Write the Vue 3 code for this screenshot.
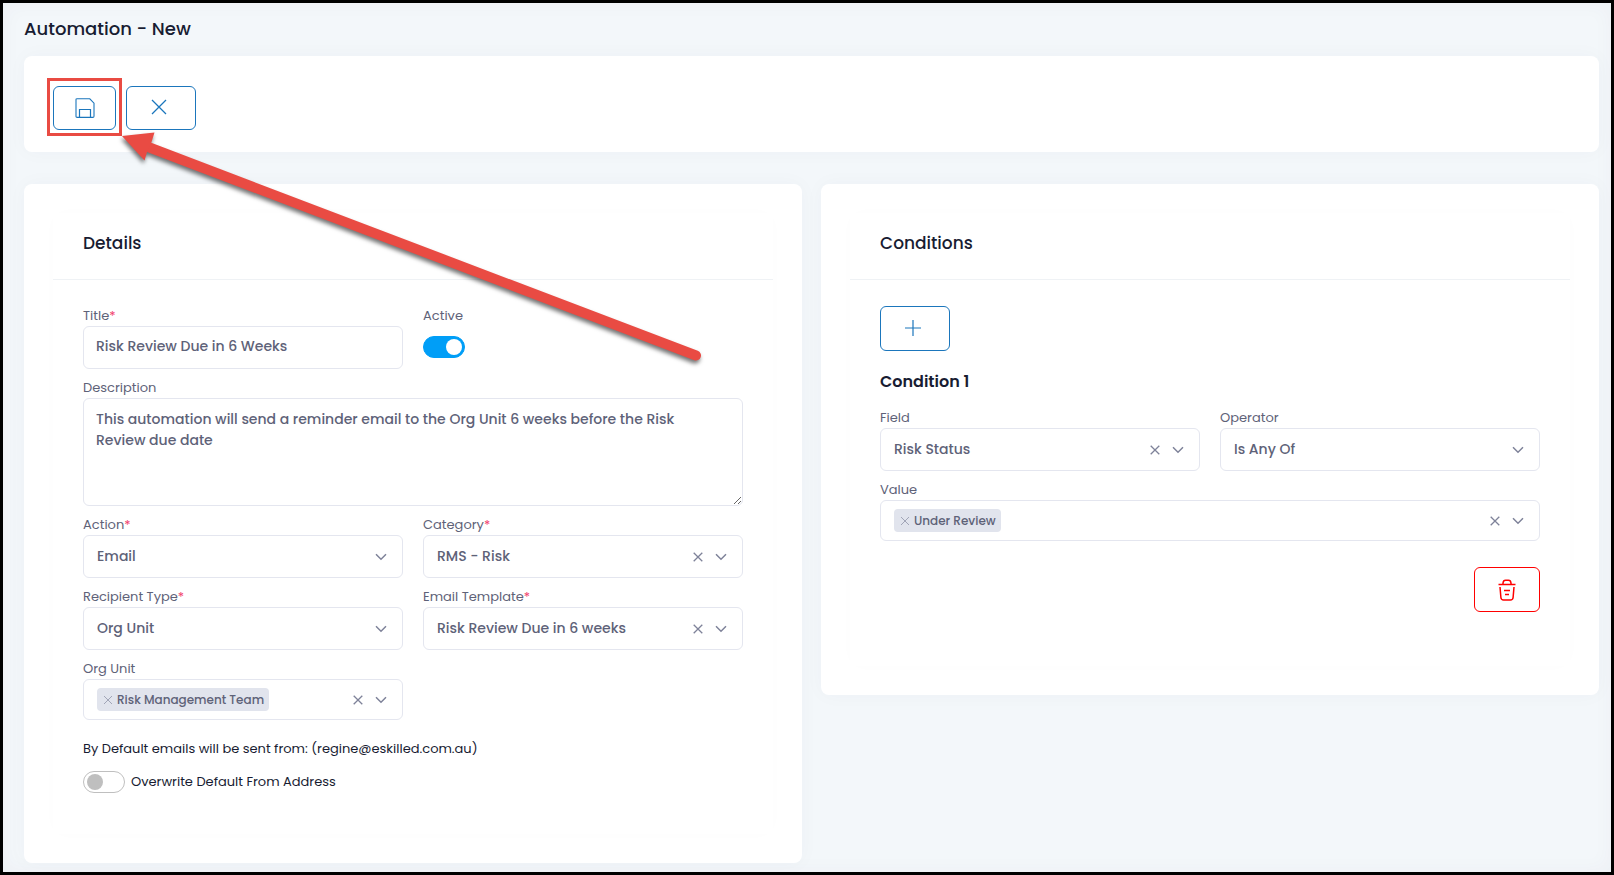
<script setup>
import { ref } from 'vue'

const title = ref('Risk Review Due in 6 Weeks')
const active = ref(true)
const description = ref(
  'This automation will send a reminder email to the Org Unit 6 weeks before the Risk Review due date'
)
const overwrite = ref(false)

const detailSelects = [
  { id: 'action', label: 'Action', required: true, value: 'Email', clearable: false },
  { id: 'category', label: 'Category', required: true, value: 'RMS - Risk', clearable: true },
  { id: 'recipient', label: 'Recipient Type', required: true, value: 'Org Unit', clearable: false },
  { id: 'template', label: 'Email Template', required: true, value: 'Risk Review Due in 6 weeks', clearable: true }
]
const conditionSelects = [
  { id: 'field', label: 'Field', value: 'Risk Status', clearable: true },
  { id: 'operator', label: 'Operator', value: 'Is Any Of', clearable: false }
]
</script>

<template>
  <div class="page">
    <h1 class="page-title">Automation - New</h1>

    <section class="card toolbar">
      <div class="callout">
        <button class="btn save" type="button" aria-label="Save">
          <svg width="20" height="20" viewBox="0 0 20 20" fill="none" stroke="currentColor">
            <path d="M1.5 .8H14.8L19 5.2V18.2Q19 19.4 17.8 19.4H2.2Q1 19.4 1 18.2V1.6Q1 .8 1.8 .8Z" stroke-width="1.1" />
            <path d="M4.5 19V11.5H15.5V19" stroke-width="1.2" />
          </svg>
        </button>
        <span class="callout-frame"></span>
        <svg class="callout-arrow" width="600" height="260" viewBox="0 0 600 260">
          <path d="M96.500 61.500L643 269.500" stroke="#e94b43" stroke-width="10" stroke-linecap="round" />
          <path d="M69 50L101.500 46.500L98.500 56L94 66L91.500 74.500Z" fill="#e94b43" />
        </svg>
      </div>
      <button class="btn wide" type="button" aria-label="Cancel">
        <svg width="16" height="16" viewBox="0 0 16 16" fill="none" stroke="currentColor" stroke-width="1.3">
          <path d="M1 1L15 15M15 1L1 15" />
        </svg>
      </button>
    </section>

    <div class="columns">
      <section class="card panel-card">
        <div class="panel details">
          <h2 class="panel-title">Details</h2>
          <div class="panel-body">
            <div class="grid">
              <div class="field">
                <label for="title">Title<em>*</em></label>
                <input id="title" v-model="title" class="control text" type="text" />
              </div>
              <div class="field">
                <label for="active">Active</label>
                <div class="switch-row">
                  <input id="active" v-model="active" class="switch" type="checkbox" role="switch" />
                </div>
              </div>
              <div class="field full">
                <label for="description">Description</label>
                <textarea id="description" v-model="description" class="control area"></textarea>
              </div>
              <div v-for="s in detailSelects" :key="s.id" class="field">
                <label :for="s.id">{{ s.label }}<em v-if="s.required">*</em></label>
                <div class="control picker">
                  <select :id="s.id"><option>{{ s.value }}</option></select>
                  <button v-if="s.clearable" class="clear" type="button" aria-label="Clear">
                    <svg width="10" height="10" viewBox="0 0 10 10"><path d="M.7 .7L9.300 9.300M9.300 .7L.7 9.300" /></svg>
                  </button>
                  <svg class="chevron" width="12" height="8" viewBox="0 0 12 8"><path d="M1 1.200L6 6.200L11 1.200" /></svg>
                </div>
              </div>
              <div class="field">
                <span id="org-label" class="label">Org Unit</span>
                <div class="control picker multi" role="group" aria-labelledby="org-label">
                  <span class="tag">
                    <button type="button" aria-label="Remove Risk Management Team">
                      <svg width="10" height="10" viewBox="0 0 10 10"><path d="M1 1L9 9M9 1L1 9" /></svg>
                    </button>Risk Management Team
                  </span>
                  <button class="clear" type="button" aria-label="Clear">
                    <svg width="10" height="10" viewBox="0 0 10 10"><path d="M.7 .7L9.300 9.300M9.300 .7L.7 9.300" /></svg>
                  </button>
                  <svg class="chevron" width="12" height="8" viewBox="0 0 12 8"><path d="M1 1.200L6 6.200L11 1.200" /></svg>
                </div>
              </div>
            </div>
            <p class="note">By Default emails will be sent from: (regine@eskilled.com.au)</p>
            <div class="overwrite">
              <input id="overwrite" v-model="overwrite" class="switch" type="checkbox" role="switch" />
              <label for="overwrite">Overwrite Default From Address</label>
            </div>
          </div>
        </div>
      </section>

      <section class="card panel-card">
        <div class="panel conditions">
          <h2 class="panel-title">Conditions</h2>
          <div class="panel-body">
            <button class="btn wide tall" type="button" aria-label="Add condition">
              <svg width="16" height="16" viewBox="0 0 16 16" fill="none" stroke="currentColor" stroke-width="1.2">
                <path d="M8 0V16M0 8H16" />
              </svg>
            </button>
            <h3 class="condition-title">Condition 1</h3>
            <div class="grid">
              <div v-for="s in conditionSelects" :key="s.id" class="field">
                <label :for="s.id">{{ s.label }}</label>
                <div class="control picker">
                  <select :id="s.id"><option>{{ s.value }}</option></select>
                  <button v-if="s.clearable" class="clear" type="button" aria-label="Clear">
                    <svg width="10" height="10" viewBox="0 0 10 10"><path d="M.7 .7L9.300 9.300M9.300 .7L.7 9.300" /></svg>
                  </button>
                  <svg class="chevron" width="12" height="8" viewBox="0 0 12 8"><path d="M1 1.200L6 6.200L11 1.200" /></svg>
                </div>
              </div>
              <div class="field full">
                <span id="value-label" class="label">Value</span>
                <div class="control picker multi" role="group" aria-labelledby="value-label">
                  <span class="tag">
                    <button type="button" aria-label="Remove Under Review">
                      <svg width="10" height="10" viewBox="0 0 10 10"><path d="M1 1L9 9M9 1L1 9" /></svg>
                    </button>Under Review
                  </span>
                  <button class="clear" type="button" aria-label="Clear">
                    <svg width="10" height="10" viewBox="0 0 10 10"><path d="M.7 .7L9.300 9.300M9.300 .7L.7 9.300" /></svg>
                  </button>
                  <svg class="chevron" width="12" height="8" viewBox="0 0 12 8"><path d="M1 1.200L6 6.200L11 1.200" /></svg>
                </div>
              </div>
            </div>
            <div class="actions">
              <button class="btn danger tall" type="button" aria-label="Delete condition">
                <svg width="18" height="22" viewBox="0 0 18 22" fill="none" stroke="currentColor" stroke-width="1.500">
                  <path d="M.5 5.500H17.500M5 5.500V4Q5.300 1.200 7.500 1.200H10.500Q12.700 1.200 13 4V5.500" />
                  <path d="M2 8L2.900 18.500Q3.200 21 5.500 21H12.500Q14.800 21 15.100 18.500L16 8" />
                  <path d="M6 11.500H12M7 15.500H11" />
                </svg>
              </button>
            </div>
          </div>
        </div>
      </section>
    </div>
  </div>
</template>

<style>
body {
  margin: 0;
}
</style>

<style scoped>
.page {
  box-sizing: border-box;
  min-height: 100vh;
  border: 3px solid #000;
  padding: 11px 12px 9px 21px;
  background: #f3f7fa;
  box-shadow: inset 0 0 20px rgba(82, 63, 105, 0.04);
  color: #181c32;
  font-family: Poppins, Inter, "Open Sans", sans-serif;
  font-size: 13px;
}
.page *,
.page *::before {
  box-sizing: border-box;
}
button,
input,
select,
textarea {
  margin: 0;
  font-family: inherit;
}
.page-title {
  margin: 0 0 12px;
  font-size: 18px;
  font-weight: 500;
  line-height: 30px;
}
.card {
  background: #fff;
  border-radius: 8px;
  box-shadow: 0 0 20px rgba(56, 71, 109, 0.03);
}
.toolbar {
  display: flex;
  gap: 10px;
  padding: 30px 29px 22px;
  margin-bottom: 32px;
}
.btn {
  display: inline-flex;
  align-items: center;
  justify-content: center;
  height: 44px;
  padding: 0;
  border: 1px solid #1b76bc;
  border-radius: 6px;
  background: #fff;
  color: #1b76bc;
}
.save {
  width: 63px;
}
.wide {
  width: 70px;
  padding: 0 4px 2px 0;
}
.tall {
  height: 45px;
}
.danger {
  width: 66px;
  border-color: #f00;
  color: #f00;
}
.callout {
  position: relative;
  display: flex;
}
.callout-frame {
  position: absolute;
  inset: -8px -6px -6px;
  border: 3px solid #e94b43;
  pointer-events: none;
}
.callout-arrow {
  position: absolute;
  top: 0;
  left: 0;
  z-index: 2;
  overflow: visible;
  pointer-events: none;
  filter: drop-shadow(-1px 3px 2px rgba(0, 0, 0, 0.55));
}
.columns {
  display: grid;
  grid-template-columns: 1fr 1fr;
  align-items: start;
  gap: 19px;
}
.panel-card {
  padding: 29px;
}
.panel {
  border-radius: 8px;
  box-shadow: 0 0 20px rgba(56, 71, 109, 0.01);
}
.panel-title {
  margin: 0;
  padding: 0 30px 6px;
  border-bottom: 1px solid #eff2f5;
  font-size: 17px;
  font-weight: 500;
  line-height: 60px;
}
.panel-body {
  padding: 26px 30px 40px;
}
.conditions .panel-body {
  padding-bottom: 54px;
}
.grid {
  display: grid;
  grid-template-columns: 1fr 1fr;
  gap: 9px 20px;
}
.full {
  grid-column: 1 / -1;
}
.field label,
.label {
  display: block;
  margin-bottom: 1px;
  color: #5e6278;
  line-height: 19px;
}
.field em {
  color: #f1416c;
  font-style: normal;
}
.control {
  display: block;
  width: 100%;
  border: 1px solid #e4e6ef;
  border-radius: 6px;
  background: #fff;
  color: #5e6278;
  font-size: 14px;
  font-weight: 500;
}
.text {
  height: 43px;
  padding: 0 12px 3px;
}
.area {
  height: 108px;
  padding: 10px 24px 10px 12px;
  line-height: 21px;
  resize: vertical;
}
.picker {
  display: flex;
  align-items: center;
  height: 43px;
  padding: 0 15px 0 13px;
}
.picker select {
  flex: 1;
  min-width: 0;
  height: 38px;
  padding: 0 0 2px;
  border: 0;
  appearance: none;
  background: transparent;
  color: inherit;
  font-size: inherit;
  font-weight: inherit;
}
.picker.multi {
  height: 41px;
}
.clear,
.tag button {
  display: flex;
  padding: 0;
  border: 0;
  background: none;
  color: #7e8299;
}
.clear {
  margin: 0 12px 0 auto;
}
.clear path,
.tag path,
.chevron path {
  fill: none;
  stroke: currentColor;
}
.clear path {
  stroke-width: 1.3;
}
.chevron {
  color: #7e8299;
  pointer-events: none;
}
.chevron path {
  stroke-width: 1.5;
}
.tag {
  display: inline-flex;
  align-items: center;
  gap: 4px;
  height: 23px;
  padding: 0 5px 0 6px;
  border-radius: 4px;
  background: #e1e4ed;
  font-size: 12px;
}
.tag button {
  color: #a1a5b7;
}
.switch-row {
  display: flex;
  align-items: center;
  height: 43px;
  padding-bottom: 1px;
}
.switch {
  flex: none;
  width: 42px;
  height: 22px;
  border: 1px solid #bfbfbf;
  border-radius: 11px;
  appearance: none;
  background: #fff;
}
.switch::before {
  content: "";
  display: block;
  width: 16px;
  height: 16px;
  margin: 2px 3px;
  border-radius: 50%;
  background: #bfbfbf;
}
.switch:checked {
  border-color: #009ef7;
  background: #009ef7;
}
.switch:checked::before {
  margin-left: 22px;
  background: #fff;
}
.note {
  margin: 19px 0 11px;
  line-height: 20px;
}
.overwrite {
  display: flex;
  align-items: center;
  gap: 6px;
  height: 24px;
}
.condition-title {
  margin: 19px 0 14px;
  font-size: 16px;
  font-weight: 600;
  line-height: 24px;
}
.actions {
  display: flex;
  justify-content: flex-end;
  margin-top: 26px;
}
</style>
